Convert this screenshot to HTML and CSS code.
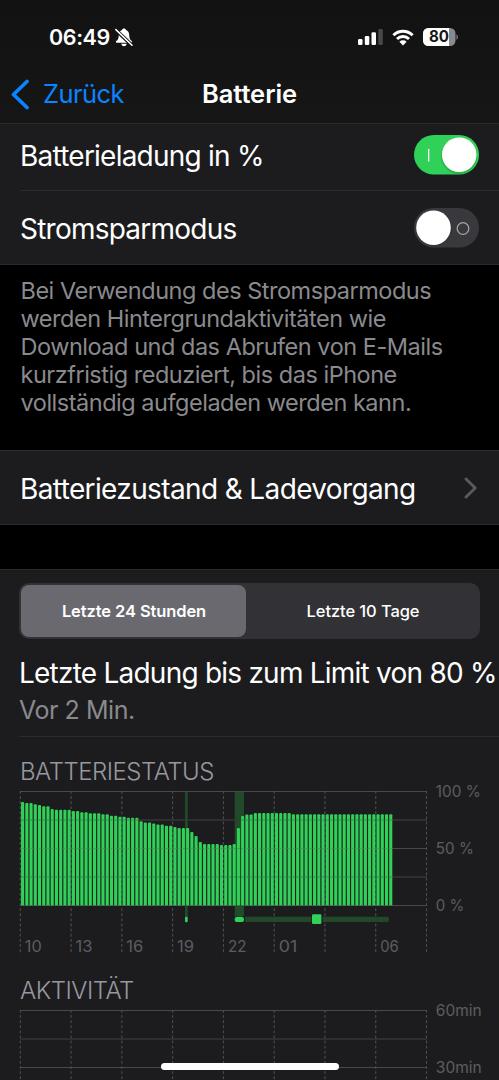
FILE: index.html
```html
<!DOCTYPE html>
<html lang="de">
<head>
<meta charset="utf-8">
<title>Batterie</title>
<link rel="stylesheet" href="styles.css">
</head>
<body>
<div class="screen">
  <header class="header">
    <div class="status">
      <span class="time">06:49</span>
      <svg class="bell" width="18" height="19" viewBox="0 0 18 19">
        <path fill="#fff" d="M9 .4c1.100 0 1.900.6 2 1.500 2.100.7 3.100 2.500 3.200 4.900.1 3.500.7 4.800 2.500 6.300.8.7.6 1.700-.6 1.700H1.900c-1.200 0-1.400-1-.6-1.700 1.800-1.500 2.400-2.800 2.500-6.300C3.900 4.400 4.900 2.600 7 1.900 7.100 1 7.900.4 9 .4zM6.300 15.800h5.400c-.2 1.500-1.200 2.500-2.700 2.500s-2.500-1-2.700-2.500z"/>
        <path stroke="#131313" stroke-width="3.600" d="M0 1.200 18 18.200"/>
        <path stroke="#fff" stroke-width="1.600" stroke-linecap="round" d="M.9 1.600 17 17.200"/>
      </svg>
      <span class="spacer"></span>
      <svg class="signal" width="26" height="18" viewBox="0 0 26 18">
        <rect x="0" y="11" width="4.500" height="6" rx="1.300" fill="#fff"/>
        <rect x="6.800" y="8" width="4.500" height="9" rx="1.300" fill="#fff"/>
        <rect x="13.500" y="4.200" width="4.500" height="12.800" rx="1.300" fill="#fff"/>
        <rect x="20.300" y="1" width="4.500" height="16" rx="1.300" fill="#48484a"/>
      </svg>
      <svg class="wifi" width="22" height="17" viewBox="0 0 22 17">
        <g fill="none" stroke="#fff" stroke-width="2.900">
          <path d="M1.400 6.200a13.700 13.700 0 0 1 19.200 0"/>
          <path d="M5 10a8.500 8.500 0 0 1 12 0"/>
        </g>
        <path fill="#fff" d="M11 16.400 7.400 12.700a5.200 5.200 0 0 1 7.200 0z"/>
      </svg>
      <svg class="battery" width="36" height="18" viewBox="0 0 36 18">
        <defs><clipPath id="cell"><rect width="32.500" height="18" rx="5.500"/></clipPath></defs>
        <g clip-path="url(#cell)"><rect width="33" height="18" fill="#8a8a8c"/><rect width="26" height="18" fill="#fff"/></g>
        <path fill="#8a8a8c" d="M33.500 6.200c1.800.9 1.800 4.700 0 5.600z"/>
        <text class="charge" x="6" y="14.400" textLength="20" lengthAdjust="spacingAndGlyphs">80</text>
      </svg>
    </div>
    <nav class="nav">
      <span class="back">
        <svg width="19" height="31" viewBox="0 0 19 31"><path d="M16 2.500 2.500 15.500 16 28.500" fill="none" stroke="#0a84ff" stroke-width="3.700" stroke-linecap="round" stroke-linejoin="round"/></svg>
        <span class="back-label">Zurück</span>
      </span>
      <h1 class="title">Batterie</h1>
    </nav>
  </header>

  <section class="group">
    <div class="row row-first"><span class="label">Batterieladung in %</span>
      <svg class="switch" width="65" height="40" viewBox="0 0 65 40">
        <rect width="65" height="39.500" rx="19.750" fill="#30d158"/>
        <circle cx="45" cy="21" r="18" fill="#28b34b"/>
        <rect x="14" y="14" width="1.300" height="12.500" fill="#fff"/>
        <circle cx="45.200" cy="19.700" r="17.300" fill="#fff"/>
      </svg>
    </div>
    <div class="row row-second"><span class="label">Stromsparmodus</span>
      <svg class="switch" width="65" height="40" viewBox="0 0 65 40">
        <rect width="65" height="39.500" rx="19.750" fill="#39393d"/>
        <circle cx="20" cy="20.500" r="17.700" fill="#303033"/>
        <circle cx="49" cy="20.500" r="5.800" fill="none" stroke="#a4a4a7" stroke-width="1.300"/>
        <circle cx="19.500" cy="19.700" r="17.300" fill="#fff"/>
      </svg>
    </div>
  </section>

  <p class="note">Bei Verwendung des Stromsparmodus<br>werden Hintergrundaktivitäten wie<br>Download und das Abrufen von E-Mails<br>kurzfristig reduziert, bis das iPhone<br>vollständig aufgeladen werden kann.</p>

  <section class="group health">
    <span class="label l-health">Batteriezustand &amp; Ladevorgang</span>
    <svg width="14" height="22" viewBox="0 0 14 22"><path d="M2 2 11.200 11 2 20" fill="none" stroke="#5a5a5e" stroke-width="2.900" stroke-linecap="round" stroke-linejoin="round"/></svg>
  </section>

  <section class="group usage">
    <div class="tabs"><span class="tab tab-on">Letzte 24 Stunden</span><span class="tab">Letzte 10 Tage</span></div>
    <div class="last-charge">Letzte Ladung bis zum Limit von 80 %</div>
    <div class="ago">Vor 2 Min.</div>
    <h2 class="heading h-level">BATTERIESTATUS</h2>
    <svg id="level" class="chart" width="499" height="170" viewBox="0 785 499 170"></svg>
    <h2 class="heading h-activity">AKTIVITÄT</h2>
    <svg id="activity" class="chart" width="499" height="80" viewBox="0 1000 499 80"></svg>
  </section>
  <div class="home-bar"></div>
</div>
<script src="chart.js"></script>
</body>
</html>
```
FILE: styles.css
```css
* { box-sizing: border-box; }
body { margin: 0; background: #000; font-family: Inter, "Liberation Sans", sans-serif; color: #fff; }
.screen { position: relative; width: 499px; height: 1080px; overflow: hidden; }
.header { height: 124px; background: linear-gradient(#121212, #161617); border-bottom: 1px solid #2a2a2c; }
.status { display: flex; align-items: center; height: 74px; padding: 0 40px 0 49px; }
.time { font-size: 21.500px; font-weight: 600; letter-spacing: -0.400px; line-height: 28px; }
.bell { margin-left: 5px; }
.spacer { flex: 1; }
.wifi { margin-left: 8px; }
.battery { margin-left: 9px; }
.charge { font-size: 15.500px; font-weight: 700; fill: #161617; }
.nav { display: grid; grid-template-columns: 1fr auto 1fr; align-items: center; height: 40px; padding: 0 11px; }
.back { display: flex; align-items: center; gap: 13px; }
.back-label { font-size: 25.500px; line-height: 32px; padding-bottom: 1px; color: #0a84ff; letter-spacing: -0.550px; }
.title { margin: 0; padding-bottom: 1px; font-size: 25.500px; line-height: 32px; font-weight: 600; letter-spacing: -0.050px; }
.group { background: #1c1c1e; }
.row { display: flex; align-items: center; justify-content: space-between; padding-right: 20px; }
.row-first { height: 67px; margin-left: 20px; border-bottom: 1px solid #2b2b2d; padding-bottom: 4px; }
.row-second { height: 74px; padding-left: 20px; border-bottom: 1px solid #29292b; }
.label { padding-top: 2px; font-size: 28px; line-height: 36px; white-space: nowrap; letter-spacing: -0.770px; }
.l-health { letter-spacing: -0.630px; }
.note { margin: 0; height: 185px; padding: 12px 20px 0 20.500px; font-size: 23.500px; line-height: 28px; color: #8a8a8e; white-space: nowrap; letter-spacing: -0.480px; }
.health { display: flex; align-items: center; justify-content: space-between; height: 75px; padding: 0 21px 0 20px; border-top: 1px solid #2b2b2d; border-bottom: 1px solid #2b2b2d; }
.usage { margin-top: 44px; height: 511px; border-top: 1px solid #2b2b2d; padding-top: 13px; }
.tabs { display: grid; grid-template-columns: 225px 1fr; width: 461px; height: 56px; margin-left: 19px; padding: 2px; border-radius: 10px; background: #323236; }
.tab { display: flex; align-items: center; justify-content: center; border-radius: 8px; font-size: 16.500px; font-weight: 500; letter-spacing: -0.100px; padding-left: 2px; }
.tab-on { background: #6a696f; font-weight: 600; padding-left: 1px; }
.last-charge { margin: 14px 0 0 19px; font-size: 28px; line-height: 40px; letter-spacing: -0.770px; white-space: nowrap; }
.ago { margin-left: 19px; height: 44px; padding-top: 1px; border-bottom: 1px solid #2b2b2d; font-size: 25px; line-height: 32px; letter-spacing: -0.450px; color: #8a8a8e; }
.heading { margin: 0 0 0 20px; font-size: 24px; font-weight: 300; line-height: 30px; color: #98989f; letter-spacing: -0.500px; }
.h-level { height: 48px; padding-top: 20px; }
.h-activity { height: 45px; padding-top: 21px; }
.chart { display: block; overflow: visible; }
.axis { font-size: 15.500px; fill: #5c5c60; }
.home-bar { position: absolute; left: 161px; bottom: 10px; width: 178px; height: 7px; border-radius: 4px; background: #fff; }
```
FILE: chart.js
```js
// Columns are quarter hours; each entry is [number of columns, top edge].
const runs = [[1,802],[2,803],[1,804.2],[1,805],[2,806.3],[1,809],[4,809.8],[2,811],[2,812.2],[3,813.2],[2,814.3],[2,815.7],[2,816.7],[3,817.8],[1,821.2],[2,822.4],[1,823.6],[2,824.6],[2,825.8],[1,827],[3,828],[1,832],[1,836],[1,842],[4,844],[3,845],[1,844],[1,828],[1,816],[2,814.4],[9,813],[24,814.3]];
const X0 = 20.3, HOUR3 = 50.78, STEP = HOUR3 / 12, BASE = 905.5;

function grid(top, bottom, rows) {
  let s = '';
  rows.forEach((y, i) => {
    s += `<path d="M20 ${y}H427" stroke="${i % 2 ? '#343437' : '#48484b'}" stroke-width="${i % 2 ? 1.5 : 1}"/>`;
  });
  for (let i = 0; i < 9; i++) {
    const x = X0 + i * HOUR3;
    s += `<path d="M${x} ${top}V${bottom}" stroke="#505054" stroke-width="1" stroke-dasharray="2.8 2.3"/>`;
  }
  return s;
}

function label(x, y, text, w) {
  return `<text class="axis" x="${x}" y="${y}" textLength="${w}" lengthAdjust="spacingAndGlyphs">${text}</text>`;
}

const lines = grid(791, 954.5, [791.5, 820, 848.5, 877, 905.5]);
let level = lines;
level += '<path fill="#214a2b" d="M185 792h2.700v125H185zM234.700 792h9.300v125h-9.300z"/>';
level += '<rect x="236" y="916.700" width="153" height="5.300" rx="2.600" fill="#224729"/>';
let n = 0;
for (const [count, top] of runs) {
  for (let k = 0; k < count; k++, n++) {
    const x = X0 + 0.75 + n * STEP;
    level += `<path d="M${x} ${BASE}V${top + 1}q0-1 1-1h1.100q1 0 1 1V${BASE}z" fill="#30d158"/>`;
  }
}
level += `<g opacity=".25">${lines}</g>`;
level += '<rect x="185" y="916.700" width="2.700" height="5.500" rx="1" fill="#30d158"/>';
level += '<rect x="234" y="916" width="11.300" height="6.700" rx="3.300" fill="#1c1c1e"/><rect x="234.700" y="916.700" width="9.300" height="5.300" rx="2.600" fill="#30d158"/>';
level += '<rect x="311.300" y="913.600" width="11.300" height="11" fill="#1c1c1e"/><rect x="312" y="914.300" width="9.400" height="9.600" rx="1.200" fill="#30d158"/>';
['10', '13', '16', '19', '22', '01', '', '06'].forEach((t, i) => {
  if (t) level += label(24.8 + i * HOUR3, 951.8, t, t[0] === '1' ? 17 : 18.5);
});
level += label(435.800, 797, '100 %', 45) + label(435.800, 854, '50 %', 38) + label(435.800, 911, '0 %', 28.500);
document.getElementById('level').innerHTML = level;

document.getElementById('activity').innerHTML =
  grid(1010, 1080, [1010.500, 1039, 1067.500]) + label(435.800, 1016, '60min', 46) + label(435.800, 1073, '30min', 46);
```
